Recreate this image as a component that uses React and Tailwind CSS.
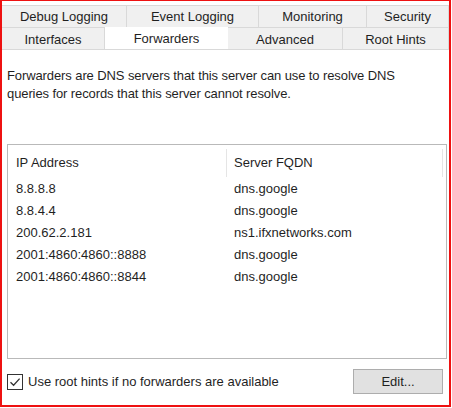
import React from "react";

const rows = [
  ["8.8.8.8", "dns.google"],
  ["8.8.4.4", "dns.google"],
  ["200.62.2.181", "ns1.ifxnetworks.com"],
  ["2001:4860:4860::8888", "dns.google"],
  ["2001:4860:4860::8844", "dns.google"],
];

function Tab({ label, w, selected, low }) {
  return (
    <div
      className={
        selected
          ? "flex h-full items-start justify-center bg-white pt-[2px]"
          : low
          ? "flex h-full items-center justify-center border-t border-r border-[#d9d9d9] bg-[#f0f0f0] pt-[2px]"
          : "flex h-full items-center justify-center border-t border-r border-[#d9d9d9] bg-[#f0f0f0]"
      }
      style={{ width: w }}
    >
      {label}
    </div>
  );
}

export default function App() {
  return (
    <div className="h-[408px] w-[452px] bg-white">
      <div
        className="flex h-[407px] w-[451px] flex-col border-x-2 border-t border-b-2 border-[#ee1111] text-[13px] text-[#1f1f1f]"
        style={{ fontFamily: '"Liberation Sans", Arial, sans-serif' }}
      >
        <div className="mt-[4px] flex h-[22px]">
          <Tab label="Debug Logging" w={125} />
          <Tab label="Event Logging" w={132} />
          <Tab label="Monitoring" w={108} />
          <Tab label="Security" w={82} />
        </div>
        <div className="flex h-[23px] border-b border-[#d9d9d9]">
          <Tab label="Interfaces" w={103} low />
          <Tab label="Forwarders" w={123} selected />
          <Tab label="Advanced" w={115} low />
          <Tab label="Root Hints" w={106} low />
        </div>
        <div className="flex flex-1 flex-col bg-white px-[5px]">
          <p className="mt-[17px] leading-[18px] tracking-[-0.1px]">
            Forwarders are DNS servers that this server can use to resolve DNS
            <br />
            queries for records that this server cannot resolve.
          </p>
          <div className="mt-[41px] h-[215px] w-[440px] border border-[#b9b9b9]">
            <div className="flex h-[33px] items-center pt-[3px]">
              <div className="flex h-[28px] w-[218px] items-center pl-[8px]">IP Address</div>
              <div className="h-[28px] w-px bg-[#e5e5e5]" />
              <div className="flex h-[28px] w-[215px] items-center pl-[7px]">Server FQDN</div>
              <div className="h-[28px] w-px bg-[#e5e5e5]" />
            </div>
            {rows.map(([ip, fqdn]) => (
              <div key={ip} className="flex h-[22px] items-center">
                <div className="w-[219px] pl-[8px]">{ip}</div>
                <div className="pl-[7px]">{fqdn}</div>
              </div>
            ))}
          </div>
          <div className="mt-[10px] flex items-center justify-between">
            <label className="flex items-center gap-[5px] pt-[1px]">
              <span className="flex h-[16px] w-[16px] items-center justify-center border border-[#333]">
                <svg width="12" height="12" viewBox="0 0 12 12">
                  <path d="M1.5 6.2 L4.6 9.3 L10.6 2.6" fill="none" stroke="#333" strokeWidth="1.3" />
                </svg>
              </span>
              <span>Use root hints if no forwarders are available</span>
            </label>
            <button className="mr-[1px] flex h-[25px] w-[90px] items-center justify-center border border-[#adadad] bg-[#e1e1e1]">
              Edit...
            </button>
          </div>
        </div>
      </div>
    </div>
  );
}
